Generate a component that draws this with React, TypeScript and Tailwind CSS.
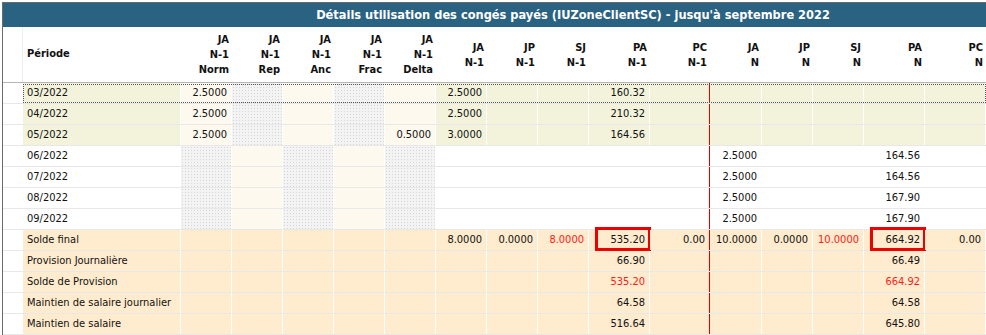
import React from 'react';

type Kind = 'prev' | 'cur' | 'total';

type Col = { key: string; w: string; head: string[] };

const cols: Col[] = [
  { key: 'norm', w: 'w-[51px]', head: ['JA', 'N-1', 'Norm'] },
  { key: 'rep', w: 'w-[51px]', head: ['JA', 'N-1', 'Rep'] },
  { key: 'anc', w: 'w-[51px]', head: ['JA', 'N-1', 'Anc'] },
  { key: 'frac', w: 'w-[51px]', head: ['JA', 'N-1', 'Frac'] },
  { key: 'delta', w: 'w-[51px]', head: ['JA', 'N-1', 'Delta'] },
  { key: 'jaN1', w: 'w-[51px]', head: ['JA', 'N-1'] },
  { key: 'jpN1', w: 'w-[51px]', head: ['JP', 'N-1'] },
  { key: 'sjN1', w: 'w-[51px]', head: ['SJ', 'N-1'] },
  { key: 'paN1', w: 'w-[61px]', head: ['PA', 'N-1'] },
  { key: 'pcN1', w: 'w-[60px]', head: ['PC', 'N-1'] },
  { key: 'jaN', w: 'w-[52px]', head: ['JA', 'N'] },
  { key: 'jpN', w: 'w-[51px]', head: ['JP', 'N'] },
  { key: 'sjN', w: 'w-[51px]', head: ['SJ', 'N'] },
  { key: 'paN', w: 'w-[61px]', head: ['PA', 'N'] },
  { key: 'pcN', w: 'w-[61px]', head: ['PC', 'N'] },
];

type Row = {
  label: string;
  kind: Kind;
  values: Record<string, string>;
  red?: string[];
  boxed?: string[];
  focus?: boolean;
};

const rows: Row[] = [
  { label: '03/2022', kind: 'prev', focus: true, values: { norm: '2.5000', jaN1: '2.5000', paN1: '160.32' } },
  { label: '04/2022', kind: 'prev', values: { norm: '2.5000', jaN1: '2.5000', paN1: '210.32' } },
  { label: '05/2022', kind: 'prev', values: { norm: '2.5000', delta: '0.5000', jaN1: '3.0000', paN1: '164.56' } },
  { label: '06/2022', kind: 'cur', values: { jaN: '2.5000', paN: '164.56' } },
  { label: '07/2022', kind: 'cur', values: { jaN: '2.5000', paN: '164.56' } },
  { label: '08/2022', kind: 'cur', values: { jaN: '2.5000', paN: '167.90' } },
  { label: '09/2022', kind: 'cur', values: { jaN: '2.5000', paN: '167.90' } },
  {
    label: 'Solde final',
    kind: 'total',
    values: {
      jaN1: '8.0000', jpN1: '0.0000', sjN1: '8.0000', paN1: '535.20', pcN1: '0.00',
      jaN: '10.0000', jpN: '0.0000', sjN: '10.0000', paN: '664.92', pcN: '0.00',
    },
    red: ['sjN1', 'sjN'],
    boxed: ['paN1', 'paN'],
  },
  { label: 'Provision Journalière', kind: 'total', values: { paN1: '66.90', paN: '66.49' } },
  { label: 'Solde de Provision', kind: 'total', values: { paN1: '535.20', paN: '664.92' }, red: ['paN1', 'paN'] },
  { label: 'Maintien de salaire journalier', kind: 'total', values: { paN1: '64.58', paN: '64.58' } },
  { label: 'Maintien de salaire', kind: 'total', values: { paN1: '516.64', paN: '645.80' } },
];

const dots =
  'bg-[#f3f3f3] bg-[image:radial-gradient(circle,#d6d6d6_0.6px,transparent_0.9px)] bg-[length:3px_3px]';
const cream = 'bg-[#fdf9ee]';
const olive = 'bg-[#f3f3dc]';

function cellBg(kind: Kind, key: string) {
  if (kind === 'total') return 'bg-[#ffebcd]';
  if (kind === 'prev') {
    if (key === 'rep' || key === 'frac') return dots;
    if (key === 'norm' || key === 'anc' || key === 'delta') return cream;
    return olive;
  }
  if (key === 'norm' || key === 'anc' || key === 'delta') return dots;
  if (key === 'rep' || key === 'frac') return cream;
  return 'bg-white';
}

export default function App() {
  return (
    <div className="w-full h-[335px] overflow-hidden bg-white pl-[2px] pt-[2px] font-['DejaVu_Sans_Condensed','Liberation_Sans',sans-serif] text-[11px] text-[#111]">
      <div className="w-[1141px] border-l border-t border-[#6b6b6b]">
        {/* titre */}
        <div className="h-[24px] bg-[#2a6282] flex items-center justify-center text-white font-bold text-[12.7px]">
          Détails utilisation des congés payés (IUZoneClientSC) - jusqu'à septembre 2022
        </div>

        {/* entêtes */}
        <div className="flex h-[56px] bg-white border-b border-[#b4b4b4]">
          <div className="w-[20px] shrink-0 border-r border-[#efefef]" />
          <div className="w-[158px] shrink-0 flex items-center pl-[4px] font-bold">Période</div>
          {cols.map((c) => (
            <div
              key={c.key}
              className={`${c.w} shrink-0 flex flex-col justify-center items-end pr-[3px] font-bold leading-[15px]`}
            >
              {c.head.map((h) => (
                <span key={h}>{h}</span>
              ))}
            </div>
          ))}
        </div>

        {/* lignes */}
        {rows.map((r) => (
          <div key={r.label} className="relative flex h-[21px] border-b border-[#e8e8e8]">
            <div className="w-[20px] shrink-0 bg-white" />
            <div
              className={`w-[158px] shrink-0 flex items-center pl-[4px] border-r border-white ${
                r.kind === 'prev' ? olive : r.kind === 'total' ? 'bg-[#ffebcd]' : 'bg-white'
              }`}
            >
              {r.label}
            </div>
            {cols.map((c) => {
              const v = r.values[c.key];
              const isRed = r.red?.includes(c.key);
              const isBoxed = r.boxed?.includes(c.key);
              return (
                <div
                  key={c.key}
                  className={`${c.w} ${cellBg(r.kind, c.key)} relative shrink-0 flex items-center justify-end pr-[4px] border-r ${
                    c.key === 'pcN1' ? 'border-r-[#e00000]' : 'border-r-white'
                  } ${isRed ? 'text-[#ff1a1a]' : ''}`}
                >
                  {v}
                  {isBoxed && (
                    <div className="absolute left-[6px] top-[-3px] w-[56px] h-[24px] border-[3px] border-[#ee0000]" />
                  )}
                </div>
              );
            })}
            {r.focus && (
              <div className="absolute left-[20px] top-[1px] w-[963px] h-[19px] border border-dotted border-[#555] pointer-events-none" />
            )}
          </div>
        ))}
      </div>
    </div>
  );
}
